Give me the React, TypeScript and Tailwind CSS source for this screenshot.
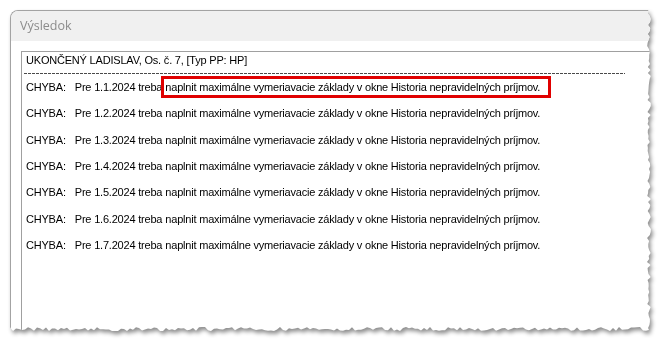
import { useMemo } from "react";

const W = 645;
const H = 324;

// torn right and bottom edges, like a snipping tool effect
function tornEdge(): string {
  let seed = 11;
  const rnd = () => {
    seed = (seed * 9301 + 49297) % 233280;
    return seed / 233280;
  };
  const pts: string[] = ["0px 0px"];
  for (let y = 0; y <= H - 6; y += 3) {
    pts.push(`${(W - 4 - rnd() * 4).toFixed(1)}px ${y}px`);
  }
  for (let x = W - 6; x >= 0; x -= 3) {
    pts.push(`${x}px ${(H - 3 - rnd() * 4).toFixed(1)}px`);
  }
  pts.push(`0px ${H - 4}px`);
  return `polygon(${pts.join(", ")})`;
}

const dates = ["1.1.2024", "1.2.2024", "1.3.2024", "1.4.2024", "1.5.2024", "1.6.2024", "1.7.2024"];
const msg = "naplnit maximálne vymeriavacie základy v okne Historia nepravidelných príjmov.";

export default function App() {
  const clip = useMemo(() => tornEdge(), []);

  return (
    <div className="w-[670px] h-[351px] bg-white overflow-hidden pt-[10px] pl-[10px]">
      <div className="drop-shadow-[2px_3px_2px_rgba(0,0,0,0.45)]">
        <div
          className="w-[645px] h-[324px] bg-white border-t border-l border-[#a3a3a3] rounded-tl-[8px] overflow-hidden flex flex-col"
          style={{ clipPath: clip }}
        >
          {/* Title bar */}
          <div className="h-[30px] bg-[#f0f0f0] flex items-center pl-[9px] shrink-0">
            <span className="text-[12.5px] text-[#8c8c8c] font-['Open_Sans',sans-serif]">Výsledok</span>
          </div>

          {/* List box */}
          <div className="flex-1 pt-[10px] pl-[10px]">
            <div className="h-full border-t border-l border-[#a0a0a0] pl-[4px] font-['Liberation_Sans',Arial,sans-serif] text-[11px] tracking-[-0.2px] text-black">
              <div className="h-[16px] leading-[16px] whitespace-nowrap">UKONČENÝ LADISLAV, Os. č. 7, [Typ PP: HP]</div>
              <div className="mt-[5px] h-px w-[601px] -ml-[2px] bg-[repeating-linear-gradient(90deg,#4a4a4a_0_3px,transparent_3px_4px)]" />
              {dates.map((d, i) => (
                <div key={d} className="h-[26.33px] flex items-center whitespace-nowrap leading-[16px]">
                  <span>CHYBA:</span>
                  <span className="ml-[9px] mr-[3px]">Pre {d} treba</span>
                  <span className="relative">
                    {msg}
                    {i === 0 && (
                      <span className="absolute -left-[4px] -right-[11px] -top-[3px] -bottom-[3px] border-[3px] border-[#e00000]" />
                    )}
                  </span>
                </div>
              ))}
            </div>
          </div>
        </div>
      </div>
    </div>
  );
}
